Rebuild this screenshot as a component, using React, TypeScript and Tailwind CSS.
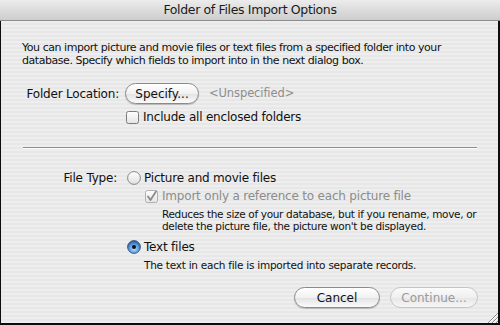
import React from "react";

const font = "font-['DejaVu_Sans',sans-serif]";

function AquaButton({ children, disabled, w }: { children: React.ReactNode; disabled?: boolean; w: string }) {
  return (
    <div
      className={`${w} h-[21px] rounded-full border flex items-center justify-center text-[12px] leading-none ${
        disabled
          ? "border-[#c4c4c4] text-[#9a9a9a] bg-[linear-gradient(#fbfbfb,#efefef_50%,#e6e6e6_51%,#f6f6f6)]"
          : "border-[#8a8a8a] text-[#111] bg-[linear-gradient(#ffffff,#f1f1f1_50%,#e2e2e2_51%,#fbfbfb)] shadow-[0_1px_1px_rgba(0,0,0,0.2)]"
      }`}
    >
      {children}
    </div>
  );
}

function CheckBox({ checked, disabled }: { checked?: boolean; disabled?: boolean }) {
  return (
    <svg width="13" height="13" viewBox="0 0 13 13" className="shrink-0">
      <defs>
        <linearGradient id={`cb${checked ? 1 : 0}`} x1="0" y1="0" x2="0" y2="1">
          <stop offset="0" stopColor="#ffffff" />
          <stop offset="1" stopColor="#e4e4e4" />
        </linearGradient>
      </defs>
      <rect x="0.5" y="0.5" width="12" height="12" rx="2" fill={`url(#cb${checked ? 1 : 0})`} stroke={disabled ? "#b0b0b0" : "#7c7c7c"} />
      {checked && (
        <path d="M3 6.5 L5.5 10 L11 1.5" fill="none" stroke={disabled ? "#8a8a8a" : "#222"} strokeWidth="1.8" strokeLinecap="round" strokeLinejoin="round" />
      )}
    </svg>
  );
}

function Radio({ selected }: { selected?: boolean }) {
  return (
    <svg width="14" height="14" viewBox="0 0 14 14" className="shrink-0">
      <defs>
        <linearGradient id="rw" x1="0" y1="0" x2="0" y2="1">
          <stop offset="0" stopColor="#ffffff" />
          <stop offset="1" stopColor="#e0e0e0" />
        </linearGradient>
        <radialGradient id="rb" cx="0.5" cy="0.65" r="0.6">
          <stop offset="0" stopColor="#b9ddff" />
          <stop offset="0.6" stopColor="#5a9ae0" />
          <stop offset="1" stopColor="#2d5fa8" />
        </radialGradient>
      </defs>
      <circle cx="7" cy="7" r="6.4" fill={selected ? "url(#rb)" : "url(#rw)"} stroke={selected ? "#2f4f7c" : "#7c7c7c"} strokeWidth="0.9" />
      {selected && <circle cx="7" cy="7" r="2" fill="#111" />}
    </svg>
  );
}

export default function App() {
  return (
    <div className={`w-[500px] h-[325px] flex flex-col bg-white ${font} text-[#111]`}>
      <div className="h-[21px] shrink-0 flex items-center justify-center text-[12.5px] tracking-[-0.35px] text-[#1a1a1a] bg-[linear-gradient(#ececec,#dcdcdc_50%,#cdcdcd)] border-b border-[#8d8d8d]">
        Folder of Files Import Options
      </div>
      <div className="flex-1 flex flex-col border-l border-r-2 border-b-2 border-[#0d0d0d] bg-[repeating-linear-gradient(#eeeeee_0px,#eeeeee_2px,#e7e7e7_2px,#e7e7e7_4px)] pl-[21px] pr-[20px] relative">
        <p className="mt-[20px] text-[11px] leading-[13px] tracking-[-0.45px] whitespace-nowrap">
          You can import picture and movie files or text files from a specified folder into your
          <br />
          database. Specify which fields to import into in the next dialog box.
        </p>

        <div className="mt-[16px] flex items-center">
          <div className="w-[97px] text-right text-[12px] tracking-[-0.2px]">Folder Location:</div>
          <div className="ml-[6px]">
            <AquaButton w="w-[74px]">Specify...</AquaButton>
          </div>
          <div className="ml-[10px] text-[11.5px] tracking-[-0.1px] text-[#8e8e8e]">&lt;Unspecified&gt;</div>
        </div>

        <div className="mt-[6px] ml-[104px] flex items-center gap-[4px] text-[12px] tracking-[-0.2px] h-[14px]">
          <CheckBox />
          <span>Include all enclosed folders</span>
        </div>

        <div className="mt-[23px] h-[2px] border-t border-[#8f8f8f] border-b border-b-[#fafafa] mx-[1px]" />

        <div className="mt-[22px] flex items-center h-[14px]">
          <div className="w-[95px] text-right text-[12px] tracking-[-0.2px]">File Type:</div>
          <div className="ml-[10px] flex items-center gap-[3px] text-[12px] tracking-[-0.2px]">
            <Radio />
            <span>Picture and movie files</span>
          </div>
        </div>

        <div className="mt-[4px] ml-[123px] flex items-center gap-[4px] text-[12px] tracking-[-0.2px] text-[#8c8c8c] h-[14px]">
          <CheckBox checked disabled />
          <span>Import only a reference to each picture file</span>
        </div>
        <p className="mt-[5px] ml-[140px] text-[10.5px] leading-[12px] tracking-[-0.33px] whitespace-nowrap">
          Reduces the size of your database, but if you rename, move, or
          <br />
          delete the picture file, the picture won&apos;t be displayed.
        </p>

        <div className="mt-[8px] ml-[105px] flex items-center gap-[3px] text-[12px] tracking-[-0.2px] h-[14px]">
          <Radio selected />
          <span>Text files</span>
        </div>
        <p className="mt-[5px] ml-[122px] text-[10.5px] leading-[12px] tracking-[-0.25px]">
          The text in each file is imported into separate records.
        </p>

        <div className="mt-[16px] flex justify-end gap-[10px]">
          <AquaButton w="w-[86px]">Cancel</AquaButton>
          <AquaButton w="w-[88px]" disabled>Continue...</AquaButton>
        </div>

        <svg width="11" height="11" viewBox="0 0 11 11" className="absolute right-0 bottom-0">
          <path d="M11 1 L1 11 M11 5 L5 11 M11 9 L9 11" stroke="#8a8a8a" strokeWidth="1" />
          <path d="M11 2 L2 11 M11 6 L6 11" stroke="#ffffff" strokeWidth="1" />
        </svg>
      </div>
    </div>
  );
}
